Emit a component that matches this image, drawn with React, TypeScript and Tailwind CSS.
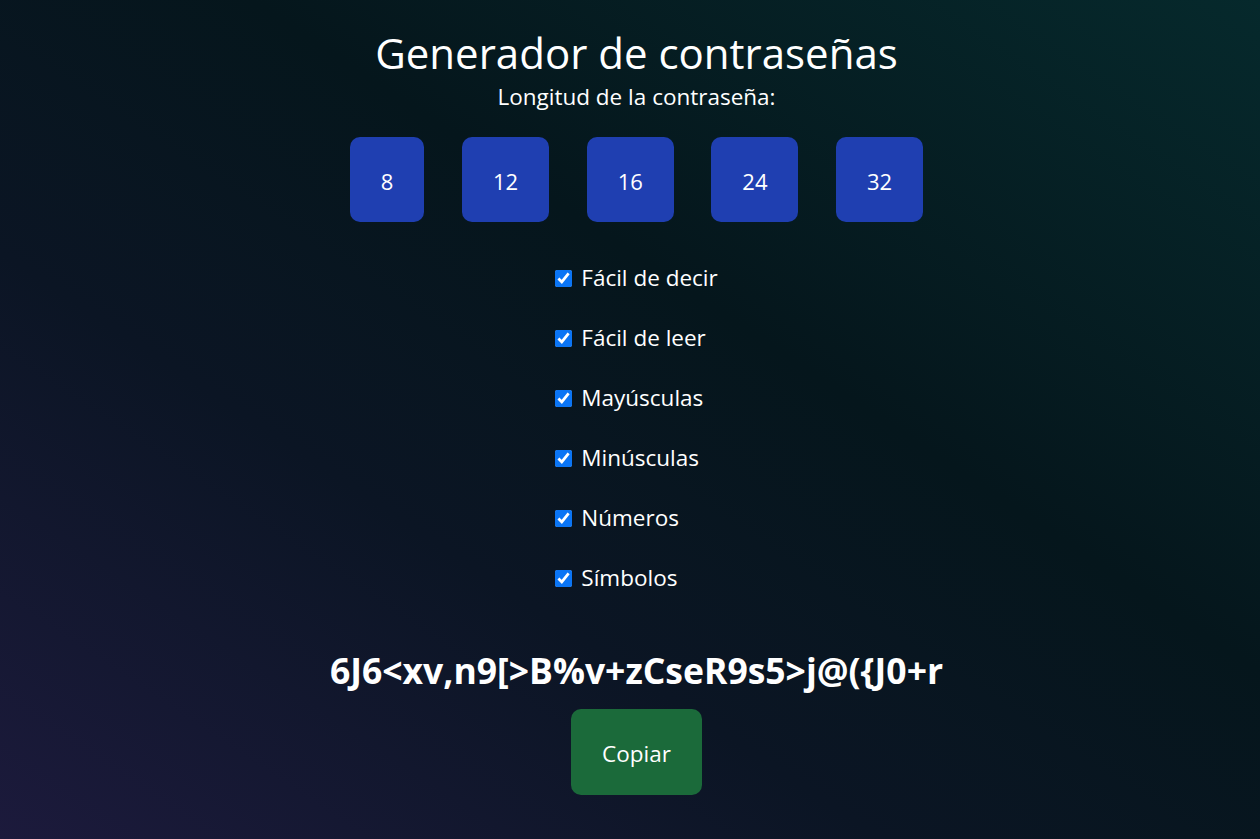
import { useState } from "react";

const lengths = [8, 12, 16, 24, 32];

const options = [
  "Fácil de decir",
  "Fácil de leer",
  "Mayúsculas",
  "Minúsculas",
  "Números",
  "Símbolos",
];

export default function App() {
  const [checked, setChecked] = useState<boolean[]>(options.map(() => true));
  const password = "6J6<xv,n9[>B%v+zCseR9s5>j@({J0+r";

  return (
    <main className="min-h-screen w-full pl-[13px] flex flex-col items-center bg-[linear-gradient(to_top_right,#1c1a3c_0%,#0b1524_35%,#05161c_60%,#06292c_100%)] text-white font-['Open_Sans',sans-serif]">
      <h1 className="mt-[28px] text-[42px] leading-[50px] font-normal">Generador de contraseñas</h1>
      <p className="mt-[4px] text-[22.5px] leading-[30px]">Longitud de la contraseña:</p>

      <div className="mt-[25px] flex gap-[37.5px]">
        {lengths.map((n) => (
          <button
            key={n}
            className="rounded-[10px] bg-[#1f3fb1] px-[31px] pt-[32px] pb-[28px] text-[22px] leading-[25px] text-white"
          >
            {n}
          </button>
        ))}
      </div>

      <div className="mt-[41px] flex flex-col gap-[30px]">
        {options.map((label, i) => (
          <label key={label} className="flex items-center gap-[9px] text-[22.5px] leading-[30px]">
            <input
              type="checkbox"
              checked={checked[i]}
              onChange={() => setChecked((c) => c.map((v, j) => (j === i ? !v : v)))}
              className="h-[17px] w-[17px] accent-[#0b75f5]"
            />
            {label}
          </label>
        ))}
      </div>

      <h2 className="mt-[55px] text-[35.5px] leading-[44px] font-bold">{password}</h2>

      <button className="mt-[17px] rounded-[10px] bg-[#1b6a3a] px-[31px] pt-[32px] pb-[28px] text-[22.5px] leading-[26px] text-white">
        Copiar
      </button>
    </main>
  );
}
